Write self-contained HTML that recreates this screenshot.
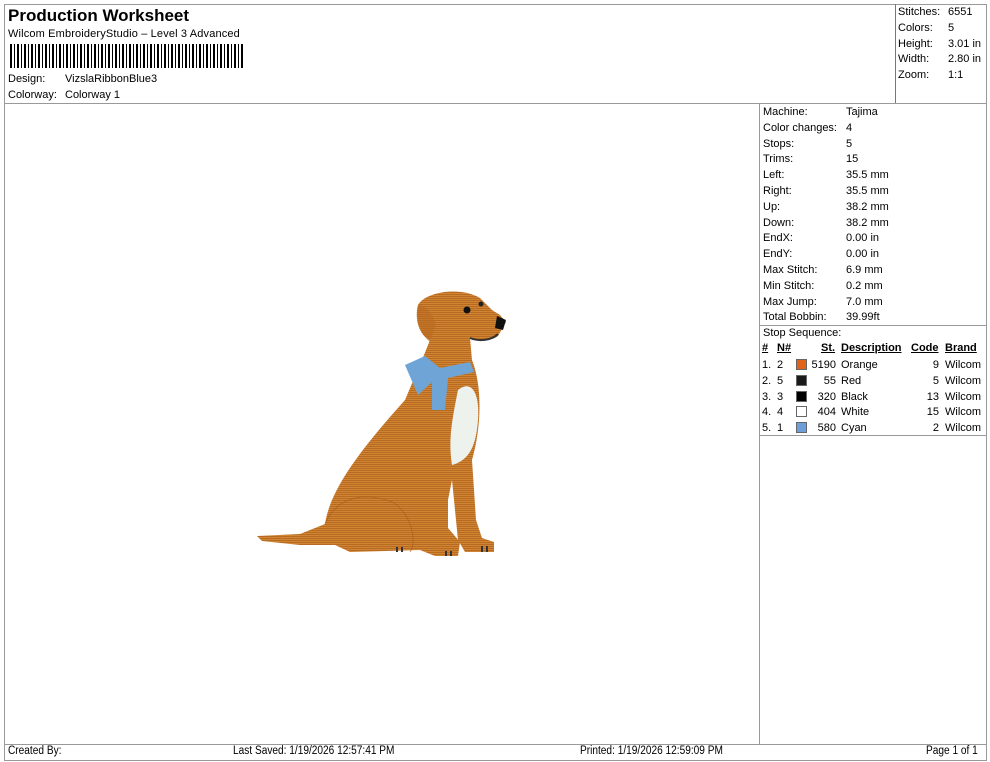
<!DOCTYPE html>
<html><head><meta charset="utf-8"><style>
body{margin:0;width:990px;height:762px;background:#fff;font-family:"Liberation Sans",Arial,sans-serif;color:#000;position:relative;overflow:hidden}
.a{position:absolute;white-space:nowrap}
.s{font-size:11px}
.b{position:absolute;border:1px solid #808080}
.ft{font-size:11.5px;transform:scaleX(.88);transform-origin:left}
</style></head><body>
<div class="b" style="left:4px;top:4px;width:981px;height:755px;border-color:#999"></div>
<div class="a" style="left:4px;top:103px;width:982px;height:1px;background:#999"></div>
<div class="a" style="left:895px;top:4px;width:1px;height:99px;background:#777"></div>
<div class="a" style="left:759px;top:103px;width:1px;height:641px;background:#999"></div>
<div class="a" style="left:760px;top:325px;width:226px;height:1px;background:#999"></div>
<div class="a" style="left:760px;top:435px;width:226px;height:1px;background:#999"></div>
<div class="a" style="left:4px;top:744px;width:982px;height:1px;background:#999"></div>

<div class="a" style="left:8px;top:6px;font-size:17px;font-weight:bold">Production Worksheet</div>
<div class="a s" style="left:8px;top:28px;letter-spacing:0.15px">Wilcom EmbroideryStudio – Level 3 Advanced</div>
<svg class="a" style="left:10px;top:44px" width="233" height="24">
<g fill="#000">
<rect x="0" width="2" height="24"/><rect x="4" width="1" height="24"/><rect x="7" width="2" height="24"/><rect x="11" width="1" height="24"/><rect x="14" width="2" height="24"/><rect x="18" width="1" height="24"/><rect x="21" width="2" height="24"/><rect x="25" width="1" height="24"/><rect x="28" width="2" height="24"/><rect x="32" width="1" height="24"/><rect x="35" width="2" height="24"/><rect x="39" width="1" height="24"/><rect x="42" width="2" height="24"/><rect x="46" width="1" height="24"/><rect x="49" width="2" height="24"/><rect x="53" width="1" height="24"/><rect x="56" width="2" height="24"/><rect x="60" width="1" height="24"/><rect x="63" width="2" height="24"/><rect x="67" width="1" height="24"/><rect x="70" width="2" height="24"/><rect x="74" width="1" height="24"/><rect x="77" width="2" height="24"/><rect x="81" width="1" height="24"/><rect x="84" width="2" height="24"/><rect x="88" width="1" height="24"/><rect x="91" width="2" height="24"/><rect x="95" width="1" height="24"/><rect x="98" width="2" height="24"/><rect x="102" width="1" height="24"/><rect x="105" width="2" height="24"/><rect x="109" width="1" height="24"/><rect x="112" width="2" height="24"/><rect x="116" width="1" height="24"/><rect x="119" width="2" height="24"/><rect x="123" width="1" height="24"/><rect x="126" width="2" height="24"/><rect x="130" width="1" height="24"/><rect x="133" width="2" height="24"/><rect x="137" width="1" height="24"/><rect x="140" width="2" height="24"/><rect x="144" width="1" height="24"/><rect x="147" width="2" height="24"/><rect x="151" width="1" height="24"/><rect x="154" width="2" height="24"/><rect x="158" width="1" height="24"/><rect x="161" width="2" height="24"/><rect x="165" width="1" height="24"/><rect x="168" width="2" height="24"/><rect x="172" width="1" height="24"/><rect x="175" width="2" height="24"/><rect x="179" width="1" height="24"/><rect x="182" width="2" height="24"/><rect x="186" width="1" height="24"/><rect x="189" width="2" height="24"/><rect x="193" width="1" height="24"/><rect x="196" width="2" height="24"/><rect x="200" width="1" height="24"/><rect x="203" width="2" height="24"/><rect x="207" width="1" height="24"/><rect x="210" width="2" height="24"/><rect x="214" width="1" height="24"/><rect x="217" width="2" height="24"/><rect x="221" width="1" height="24"/><rect x="224" width="2" height="24"/><rect x="228" width="1" height="24"/><rect x="231" width="2" height="24"/>
</g></svg>
<div class="a s" style="left:8px;top:73px">Design:</div><div class="a s" style="left:65px;top:73px">VizslaRibbonBlue3</div>
<div class="a s" style="left:8px;top:89px">Colorway:</div><div class="a s" style="left:65px;top:89px">Colorway 1</div>

<div class="a s" style="left:898px;top:5px;line-height:15.8px">Stitches:<br>Colors:<br>Height:<br>Width:<br>Zoom:</div>
<div class="a s" style="left:948px;top:5px;line-height:15.8px">6551<br>5<br>3.01 in<br>2.80 in<br>1:1</div>

<div class="a s" style="left:763px;top:105px;line-height:15.8px">Machine:<br>Color changes:<br>Stops:<br>Trims:<br>Left:<br>Right:<br>Up:<br>Down:<br>EndX:<br>EndY:<br>Max Stitch:<br>Min Stitch:<br>Max Jump:<br>Total Bobbin:<br>Stop Sequence:</div>
<div class="a s" style="left:846px;top:105px;line-height:15.8px">Tajima<br>4<br>5<br>15<br>35.5 mm<br>35.5 mm<br>38.2 mm<br>38.2 mm<br>0.00 in<br>0.00 in<br>6.9 mm<br>0.2 mm<br>7.0 mm<br>39.99ft</div>

<div class="a s" style="left:762px;top:342px;font-weight:bold;text-decoration:underline">#</div>
<div class="a s" style="left:777px;top:342px;font-weight:bold;text-decoration:underline">N#</div>
<div class="a s" style="left:821px;top:342px;font-weight:bold;text-decoration:underline">St.</div>
<div class="a s" style="left:841px;top:342px;font-weight:bold;text-decoration:underline">Description</div>
<div class="a s" style="left:911px;top:342px;font-weight:bold;text-decoration:underline">Code</div>
<div class="a s" style="left:945px;top:342px;font-weight:bold;text-decoration:underline">Brand</div>

<div class="a s" style="left:762px;top:358px;line-height:15.8px">1.<br>2.<br>3.<br>4.<br>5.</div>
<div class="a s" style="left:777px;top:358px;line-height:15.8px">2<br>5<br>3<br>4<br>1</div>
<div class="a s" style="left:806px;top:358px;width:30px;text-align:right;line-height:15.8px">5190<br>55<br>320<br>404<br>580</div>
<div class="a s" style="left:841px;top:358px;line-height:15.8px">Orange<br>Red<br>Black<br>White<br>Cyan</div>
<div class="a s" style="left:905px;top:358px;width:34px;text-align:right;line-height:15.8px">9<br>5<br>13<br>15<br>2</div>
<div class="a s" style="left:945px;top:358px;line-height:15.8px">Wilcom<br>Wilcom<br>Wilcom<br>Wilcom<br>Wilcom</div>
<div class="a" style="left:796px;top:359px;width:9px;height:9px;background:#e0631c;border:1px solid #666"></div>
<div class="a" style="left:796px;top:375px;width:9px;height:9px;background:#1a1a1a;border:1px solid #666"></div>
<div class="a" style="left:796px;top:391px;width:9px;height:9px;background:#000;border:1px solid #666"></div>
<div class="a" style="left:796px;top:406px;width:9px;height:9px;background:#fff;border:1px solid #666"></div>
<div class="a" style="left:796px;top:422px;width:9px;height:9px;background:#6f9fd8;border:1px solid #666"></div>

<svg class="a" style="left:0;top:0" width="760" height="740">
<defs><pattern id="st" width="4" height="2" patternUnits="userSpaceOnUse"><rect width="4" height="2" fill="#d08533"/><rect width="4" height="1" fill="#b86a22"/></pattern></defs>
<path d="M418 305 C425 292,460 286,480 298 L492 310 L500 315 L506 322 L498 336 C490 342,478 340,470 338 L472 360 C482 385,482 425,472 460 L476 520 L482 538 L494 542 L494 552 L465 552 L458 540 L452 480 L448 500 L448 528 L460 542 L458 556 L435 556 L420 550 L350 552 L335 545 L300 545 L262 541 L257 536 L300 534 L325 524 C330 490,360 450,405 400 L424 355 L430 340 C420 336,414 320,418 305 Z" fill="url(#st)"/>
<path d="M418 305 C416 318,420 334,430 342 L436 325 C432 312,426 305,418 305 Z" fill="#b96a22" opacity=".6"/>
<path d="M325 524 C335 500,360 490,392 502 C410 512,418 540,410 552" stroke="#a55c1a" stroke-width="1" fill="none" opacity=".6"/>
<path d="M458 390 C470 380,480 390,478 420 C476 445,470 460,452 465 C448 440,452 420,458 390 Z" fill="#eef2ec"/>
<path d="M405 365 L425 356 L440 368 L470 362 L474 372 L448 378 L445 410 L432 410 L432 382 L418 395 Z" fill="#6fa4d6"/>
<circle cx="467" cy="310" r="3.5" fill="#111"/><circle cx="481" cy="304" r="2.5" fill="#222"/>
<path d="M497 316 L506 320 L503 330 L495 328 Z" fill="#111"/>
<path d="M470 338 C480 342,492 340,498 334" stroke="#333" stroke-width="2" fill="none"/>
<g fill="#333"><rect x="445" y="551" width="2" height="5"/><rect x="450" y="551" width="2" height="5"/><rect x="481" y="546" width="2" height="6"/><rect x="486" y="546" width="2" height="6"/><rect x="396" y="547" width="2" height="5"/><rect x="401" y="547" width="2" height="5"/></g>
</svg>

<div class="a ft" style="left:8px;top:745px">Created By:</div>
<div class="a ft" style="left:233px;top:745px">Last Saved: 1/19/2026 12:57:41 PM</div>
<div class="a ft" style="left:580px;top:745px">Printed: 1/19/2026 12:59:09 PM</div>
<div class="a ft" style="left:926px;top:745px">Page 1 of 1</div>
</body></html>
